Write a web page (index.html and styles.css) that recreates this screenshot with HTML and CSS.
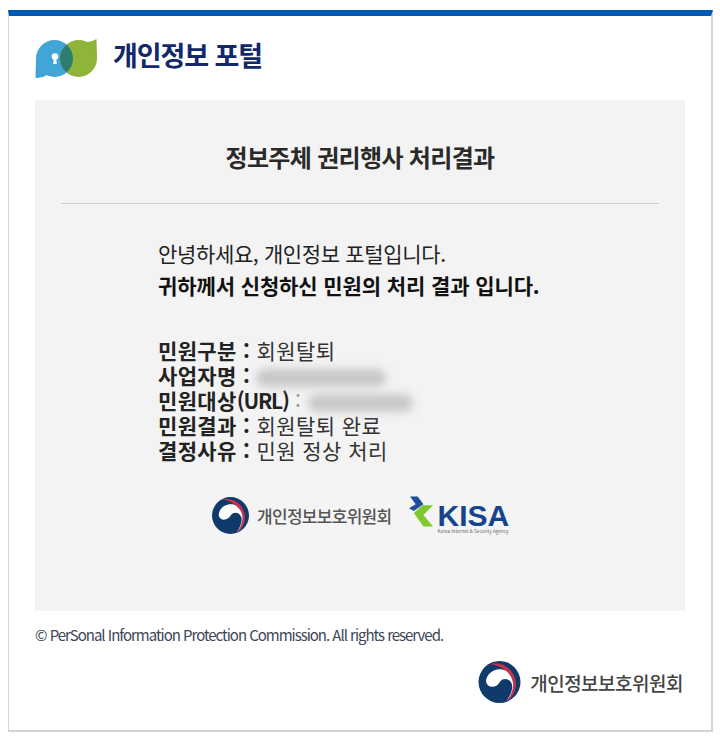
FILE: index.html
```html
<!DOCTYPE html>
<html lang="ko">
<head>
<meta charset="utf-8">
<title>개인정보 포털</title>
<link rel="stylesheet" href="styles.css">
</head>
<body>
<svg class="defs" width="0" height="0" aria-hidden="true">
  <symbol id="taegeuk" viewBox="0 0 100 100">
    <circle cx="50" cy="50" r="50" fill="#0f3a6b"/>
    <path d="M26 7A50 50 0 0 1 66 97.400C88 70 88 42 66 24C54 13 40 8 26 7Z" fill="#c9304c"/>
    <path d="M18 50C18 28 44 12 66 24C88 42 88 70 66 97.400C78 78 84 62 78 52C72 40 56 40 50 51C44 62 24 68 18 50Z" fill="#fff"/>
  </symbol>
</svg>
<main class="frame">
  <header class="brand">
    <svg class="brand-mark" viewBox="0 0 64 42" aria-hidden="true">
      <circle cx="20.500" cy="20.500" r="18.500" fill="#42a5d8"/>
      <path d="M2 20L1.500 40Q8 40.500 13 37Z" fill="#42a5d8"/>
      <circle cx="44.500" cy="20.500" r="18.500" fill="#8fb43a"/>
      <path d="M62.500 1L63 20L47 2.500Q55 6 62.500 1Z" fill="#8fb43a"/>
      <path d="M32.500 6.430A18.500 18.500 0 0 1 32.500 34.570A18.500 18.500 0 0 1 32.500 6.430Z" fill="#2f7c72"/>
      <circle cx="21" cy="18.500" r="3.300" fill="#fff"/>
      <path d="M19.800 20L22.200 20L22.800 26L19.200 26Z" fill="#fff"/>
    </svg>
    <h1 class="brand-name">개인정보 포털</h1>
  </header>
  <section class="panel">
    <h2 class="panel-title">정보주체 권리행사 처리결과</h2>
    <hr class="rule">
    <div class="message">
      <p class="greeting">안녕하세요, 개인정보 포털입니다.</p>
      <p class="lead">귀하께서 신청하신 민원의 처리 결과 입니다.</p>
      <ul class="facts">
        <li><b>민원구분 :</b> 회원탈퇴</li>
        <li><b>사업자명 :</b> <span class="redact redact-a"></span></li>
        <li><b>민원대상<span class="latin">(URL)</span></b> <span class="colon">:</span> <span class="redact redact-b"></span></li>
        <li><b>민원결과 :</b> 회원탈퇴 완료</li>
        <li><b>결정사유 :</b> 민원 정상 처리</li>
      </ul>
    </div>
    <div class="logos">
      <div class="gov gov-small">
        <svg class="taegeuk" aria-hidden="true"><use href="#taegeuk"/></svg>
        <span>개인정보보호위원회</span>
      </div>
      <div class="kisa">
        <svg class="kisa-mark" viewBox="0 0 26 32" aria-hidden="true">
          <path d="M1 0L9 0L15 8L5 15L0 12L7 8Z" fill="#1d4f9c"/>
          <path d="M25 9L14 9L5 17L15 31L25 31L15 19Z" fill="#7fc82e"/>
        </svg>
        <div class="kisa-text">
          <strong>KISA</strong>
          <small>Korea Internet &amp; Security Agency</small>
        </div>
      </div>
    </div>
  </section>
  <footer class="foot">
    <p class="copy">© PerSonal Information Protection Commission. All rights reserved.</p>
    <div class="gov gov-large">
      <svg class="taegeuk" aria-hidden="true"><use href="#taegeuk"/></svg>
      <span>개인정보보호위원회</span>
    </div>
  </footer>
</main>
</body>
</html>
```
FILE: styles.css
```css
* { box-sizing: border-box; }
html, body { margin: 0; padding: 0; background: #fff; }
body {
  width: 720px;
  height: 742px;
  overflow: hidden;
  padding: 10px 7px 0 8px;
  font-family: "Noto Sans CJK KR", "Noto Sans", sans-serif;
  color: #222;
}
.defs { position: absolute; }
.frame {
  height: 722px;
  border: 1px solid #d4d4d4;
  border-width: 0 2px 2px 1px;
  border-top: 6px solid #0059b3;
  padding: 0 26px;
  display: flex;
  flex-direction: column;
}
.brand {
  height: 84px;
  display: flex;
  align-items: center;
  gap: 15px;
  padding-top: 1px;
}
.brand-mark { width: 64px; height: 42px; flex: none; margin-left: -1px; }
.brand-name {
  margin: 0 0 8px;
  font-size: 27px;
  line-height: 32px;
  font-weight: 700;
  letter-spacing: -1.1px;
  color: #11296b;
}
.panel {
  width: 650px;
  height: 511px;
  background: #f3f3f3;
  padding: 0 26px;
  display: flex;
  flex-direction: column;
  align-items: center;
}
.panel-title {
  margin: 41px 0 0;
  font-size: 24px;
  line-height: 32px;
  font-weight: 700;
  letter-spacing: -0.67px;
  color: #2a2a2a;
}
.rule {
  width: 598px;
  margin: 30px 0 0;
  border: 0;
  border-top: 1px solid #cfcfcf;
}
.message { align-self: stretch; padding: 33px 0 0 97px; }
.greeting, .lead { margin: 0; font-size: 21px; line-height: 32px; letter-spacing: -0.35px; color: #222; }
.lead { font-weight: 700; letter-spacing: -0.1px; color: #111; }
.facts {
  list-style: none;
  margin: 37px 0 0;
  padding: 0;
  font-size: 21px;
  line-height: 25px;
  letter-spacing: 0.45px;
  color: #333;
}
.facts b { font-weight: 700; color: #222; letter-spacing: 0.35px; }
.facts .latin { letter-spacing: -1.2px; }
.colon { color: #999; }
.redact {
  display: inline-block;
  height: 18px;
  vertical-align: -3px;
  background: #c8c8c8;
  border-radius: 9px;
  filter: blur(4px);
}
.redact-a { width: 130px; }
.redact-b { width: 105px; }
.logos {
  width: 408px;
  height: 105px;
  margin-top: 1px;
  align-self: flex-start;
  margin-left: 94px;
  background: #f4f4f4;
  display: flex;
  align-items: center;
  gap: 18px;
  padding: 0 0 3px 57px;
}
.gov { display: flex; align-items: center; color: #555; white-space: nowrap; font-weight: 500; }
.gov-small { gap: 8px; font-size: 17px; letter-spacing: -0.7px; }
.gov-small .taegeuk { width: 37px; height: 37px; }
.gov-large { gap: 9px; font-size: 19px; letter-spacing: -0.5px; color: #444; }
.gov-large .taegeuk { width: 43px; height: 42px; }
.kisa { display: flex; align-items: flex-start; }
.kisa-mark { width: 25px; height: 32px; flex: none; margin: 1px 3px 0 0; }
.kisa-text { display: flex; flex-direction: column; padding-top: 10px; }
.kisa-text strong {
  font-family: "Liberation Sans", sans-serif;
  font-size: 30px;
  line-height: 22px;
  font-weight: 700;
  color: #15448f;
}
.kisa-text small { margin-top: 1px; font-size: 4.6px; line-height: 7px; color: #666; white-space: nowrap; }
.foot { display: flex; flex-direction: column; padding-top: 12px; }
.copy {
  margin: 0;
  font-size: 15px;
  line-height: 24px;
  letter-spacing: -1.02px;
  color: #3c4656;
}
.gov-large { align-self: flex-end; margin: 14px 2px 0 0; }
```
